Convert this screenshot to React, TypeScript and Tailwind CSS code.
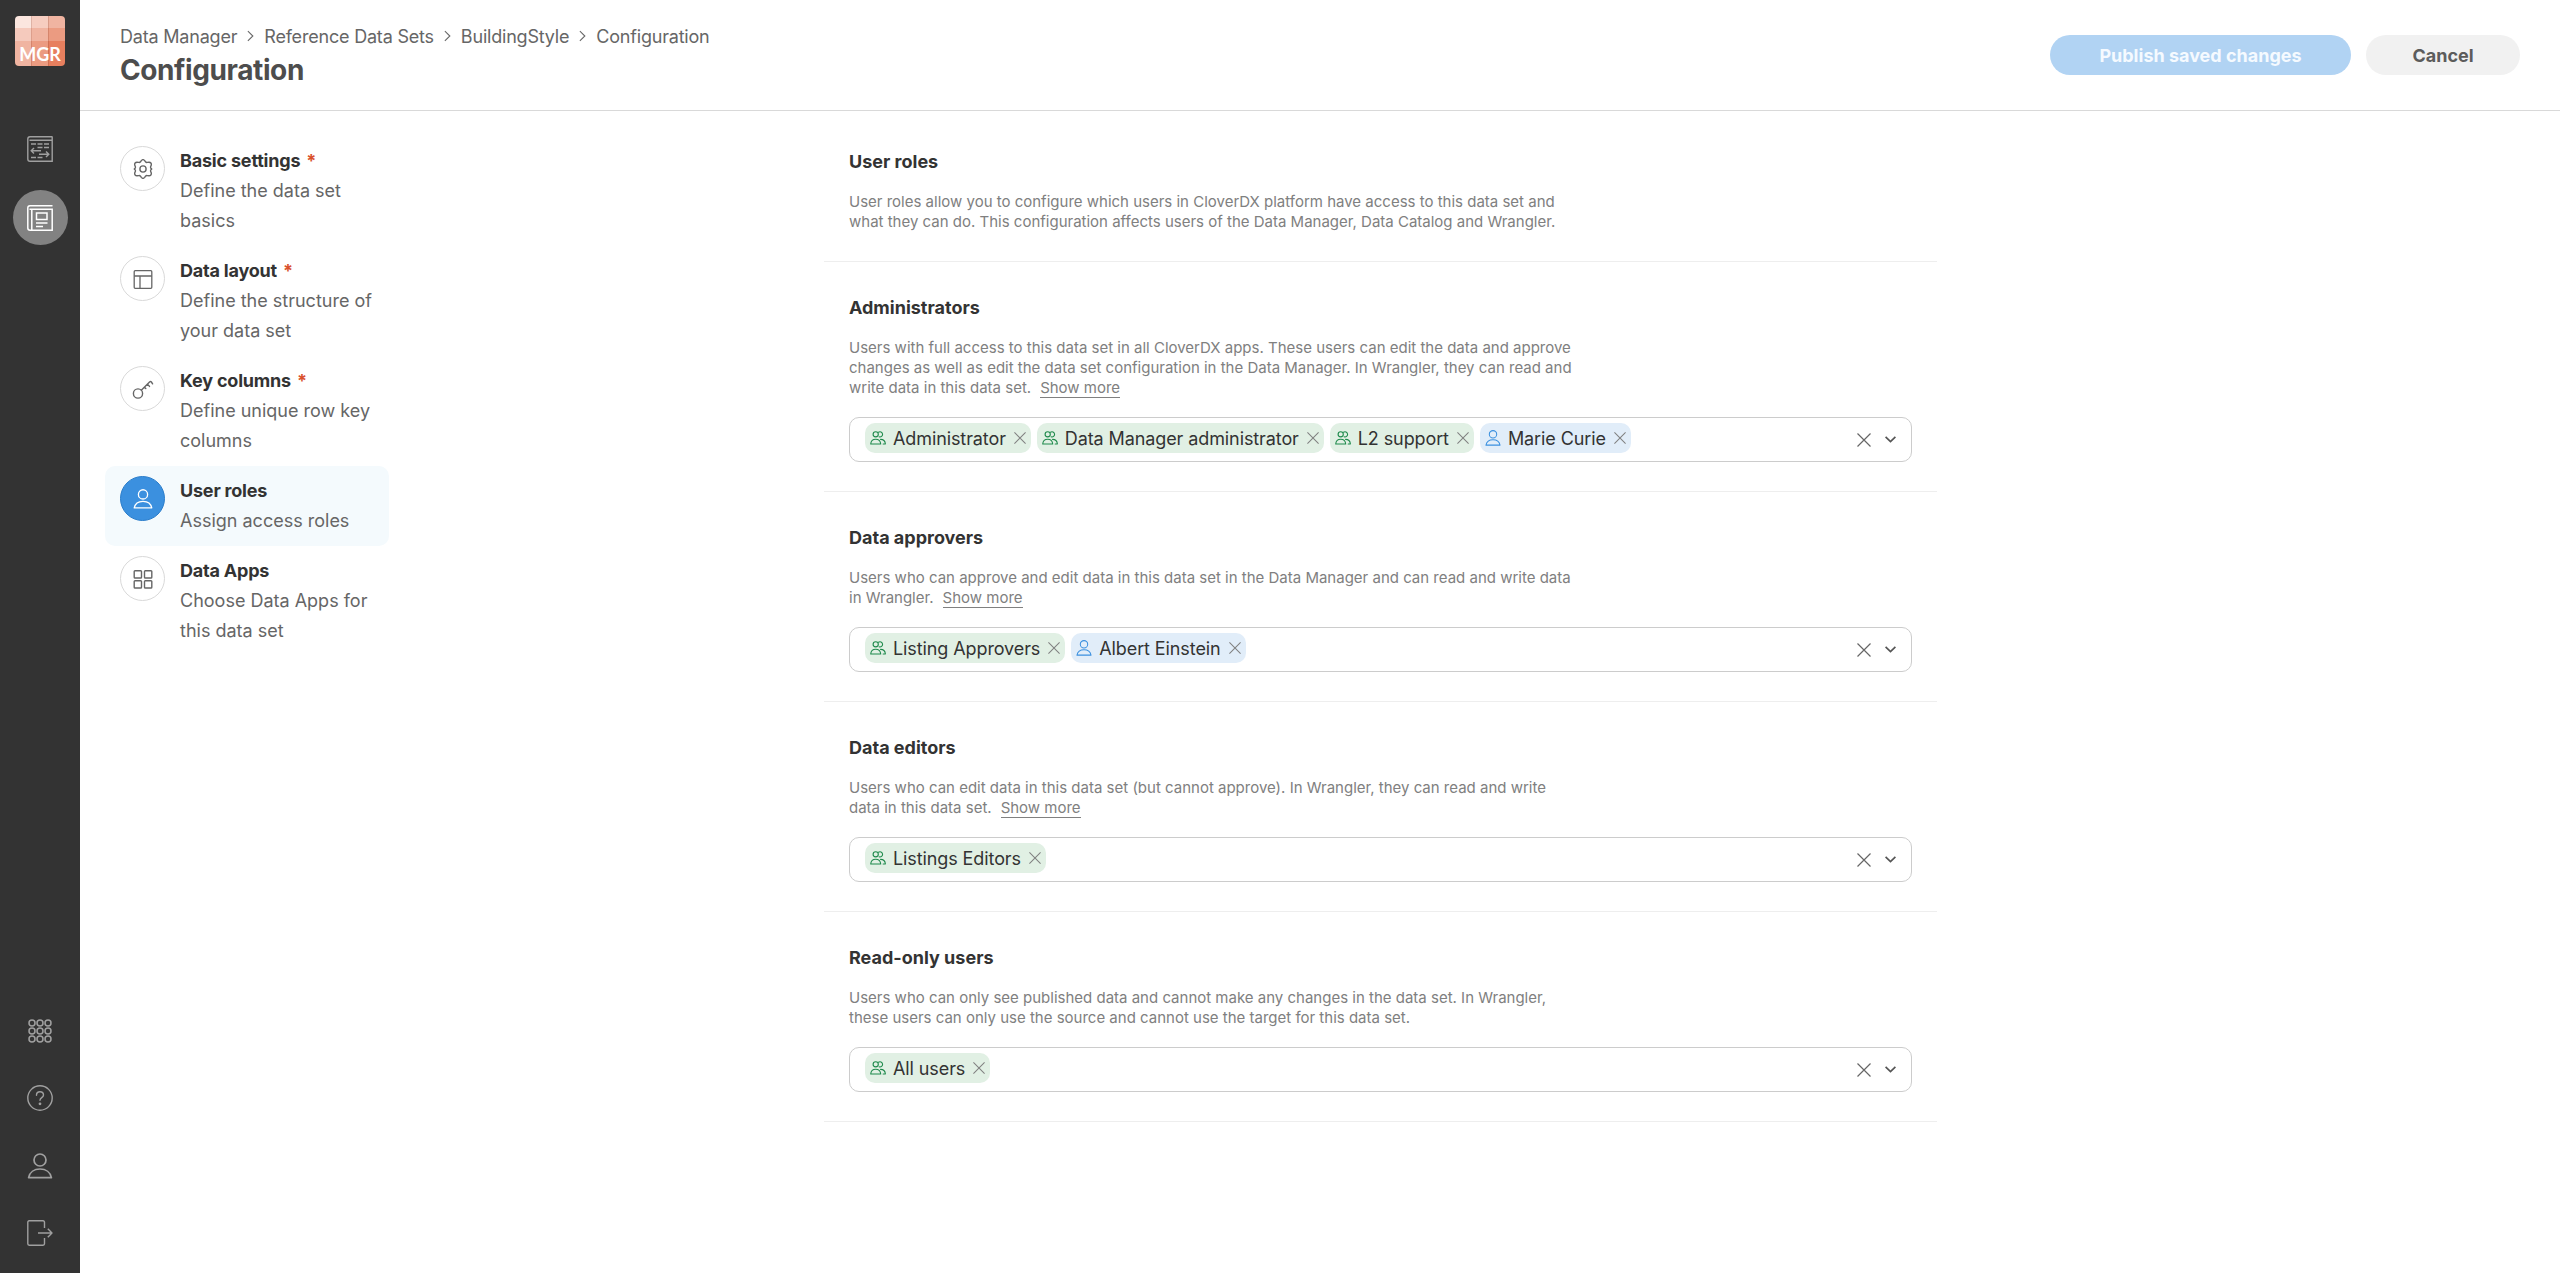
import type { ReactNode } from "react";

type Tag = { label: string; kind: "group" | "user" };

type Section = {
  title: string;
  lines: string[];
  showMore?: boolean;
  tags?: Tag[];
};

type Step = { title: string; lines: string[]; required?: boolean; active?: boolean; icon: ReactNode };

const sections: Section[] = [
  {
    title: "User roles",
    lines: [
      "User roles allow you to configure which users in CloverDX platform have access to this data set and",
      "what they can do. This configuration affects users of the Data Manager, Data Catalog and Wrangler.",
    ],
  },
  {
    title: "Administrators",
    lines: [
      "Users with full access to this data set in all CloverDX apps. These users can edit the data and approve",
      "changes as well as edit the data set configuration in the Data Manager. In Wrangler, they can read and",
      "write data in this data set.",
    ],
    showMore: true,
    tags: [
      { label: "Administrator", kind: "group" },
      { label: "Data Manager administrator", kind: "group" },
      { label: "L2 support", kind: "group" },
      { label: "Marie Curie", kind: "user" },
    ],
  },
  {
    title: "Data approvers",
    lines: [
      "Users who can approve and edit data in this data set in the Data Manager and can read and write data",
      "in Wrangler.",
    ],
    showMore: true,
    tags: [
      { label: "Listing Approvers", kind: "group" },
      { label: "Albert Einstein", kind: "user" },
    ],
  },
  {
    title: "Data editors",
    lines: [
      "Users who can edit data in this data set (but cannot approve). In Wrangler, they can read and write",
      "data in this data set.",
    ],
    showMore: true,
    tags: [{ label: "Listings Editors", kind: "group" }],
  },
  {
    title: "Read-only users",
    lines: [
      "Users who can only see published data and cannot make any changes in the data set. In Wrangler,",
      "these users can only use the source and cannot use the target for this data set.",
    ],
    tags: [{ label: "All users", kind: "group" }],
  },
];

const UserIcon = ({ className }: { className: string }) => (
  <svg viewBox="0 0 26 26" className={className} fill="none" stroke="currentColor" strokeWidth="1.7" strokeLinejoin="round">
    <circle cx="13" cy="7" r="6" />
    <path d="M1.6 24.6C2.6 19.3 7.2 16 13 16s10.4 3.3 11.4 8.6z" />
  </svg>
);

const GroupIcon = () => (
  <svg viewBox="0 0 16 14" className="h-[14px] w-4" fill="none" stroke="#1f8a4c" strokeWidth="1.1" strokeLinejoin="round" strokeLinecap="round">
    <circle cx="5.7" cy="3.3" r="2.6" />
    <path d="M.7 13c.3-3 2.300-4.700 5-4.700s4.700 1.700 5 4.700z" />
    <path d="M8.500 1.200a2.600 2.600 0 1 1 .6 4.600M10.600 8.400c2.600 0 4.500 1.700 4.800 4.600h-2.200" />
  </svg>
);

const Cross = ({ className }: { className: string }) => (
  <svg viewBox="0 0 14 14" className={className} fill="none" stroke="currentColor" strokeWidth="1.2">
    <path d="M.5.5l13 13M13.500.5l-13 13" />
  </svg>
);

const steps: Step[] = [
  {
    title: "Basic settings",
    lines: ["Define the data set", "basics"],
    required: true,
    icon: (
      <svg viewBox="0 0 20 20" className="h-5 w-5" fill="none" stroke="currentColor" strokeWidth="1.400" strokeLinejoin="round">
        <circle cx="10" cy="10" r="3.100" />
        <path d="M8.300 1.600Q10-.3 11.700 1.600L12.500 2.800Q13.200 3.600 14.200 3.400L16 3.200Q18.600 3.500 18.300 6L17.700 7.600Q17.300 8.700 18 9.400Q19.400 10 18 10.700Q17.300 11.300 17.700 12.400L18.300 14Q18.600 16.500 16 16.800L14.200 16.600Q13.200 16.400 12.500 17.200L11.700 18.400Q10 20.300 8.300 18.400L7.500 17.200Q6.800 16.400 5.800 16.600L4 16.800Q1.400 16.500 1.700 14L2.300 12.400Q2.700 11.300 2 10.700Q.6 10 2 9.400Q2.700 8.700 2.300 7.600L1.700 6Q1.400 3.500 4 3.200L5.800 3.400Q6.800 3.600 7.500 2.800Z" />
      </svg>
    ),
  },
  {
    title: "Data layout",
    lines: ["Define the structure of", "your data set"],
    required: true,
    icon: (
      <svg viewBox="0 0 20 20" className="h-5 w-5" fill="none" stroke="currentColor" strokeWidth="1.300">
        <rect x="1.200" y="1.700" width="17.600" height="17.600" rx="1" />
        <path d="M1.200 7h17.600M7 7v12.300" />
      </svg>
    ),
  },
  {
    title: "Key columns",
    lines: ["Define unique row key", "columns"],
    required: true,
    icon: (
      <svg viewBox="0 0 22 20" className="h-5 w-[22px]" fill="none" stroke="currentColor" strokeWidth="1.400" strokeLinecap="round" strokeLinejoin="round">
        <circle cx="6" cy="14.500" r="4.600" />
        <path d="M9.300 11.200L17.800 2.800Q18.700 2.200 19.400 3l1.200 1.800M15.500 5.200l2 2.200M12.500 8.200l1.300 1.400" />
      </svg>
    ),
  },
  {
    title: "User roles",
    lines: ["Assign access roles"],
    active: true,
    icon: <UserIcon className="h-5 w-5" />,
  },
  {
    title: "Data Apps",
    lines: ["Choose Data Apps for", "this data set"],
    icon: (
      <svg viewBox="0 0 20 20" className="h-5 w-5" fill="none" stroke="currentColor" strokeWidth="1.400">
        <rect x="1.200" y="1.700" width="7.300" height="7.300" rx=".8" />
        <rect x="11.500" y="1.700" width="7.300" height="7.300" rx=".8" />
        <rect x="1.200" y="11.700" width="7.300" height="7.300" rx=".8" />
        <rect x="11.500" y="11.700" width="7.300" height="7.300" rx=".8" />
      </svg>
    ),
  },
];

const crumbs = ["Data Manager", "Reference Data Sets", "BuildingStyle", "Configuration"];

function Logo() {
  return (
    <div className="relative mt-4 h-[50px] w-[50px] overflow-hidden rounded-[4px]">
      <div className="grid h-full grid-cols-[16px_17px_17px] grid-rows-[12px_13px_25px]">
        <span className="bg-[#fbe6df]" />
        <span className="border-l border-[#dfb3a5] bg-[#f6cdc0]" />
        <span className="border-l border-[#d79a87] bg-[#f0b4a1]" />
        <span className="bg-[#f5cabd]" />
        <span className="border-l border-[#dd9f8c] bg-[#f0b4a1]" />
        <span className="border-l border-[#d5856c] bg-[#eb9b81]" />
        <span className="bg-[#f0b4a1]" />
        <span className="border-l border-[#d5856c] bg-[#eb9b81]" />
        <span className="border-l border-[#cf6f51] bg-[#e77f5e]" />
      </div>
      <span className="absolute inset-x-0 bottom-[3px] text-center font-['Lato'] text-[18px] leading-[18px] font-bold text-white">MGR</span>
    </div>
  );
}

function Sidebar() {
  return (
    <aside className="flex w-20 shrink-0 flex-col items-center bg-[#333333] text-[#a0a0a0]">
      <Logo />
      <svg viewBox="0 0 26 26" className="mt-[70px] h-[26px] w-[26px]" fill="none" stroke="currentColor" strokeWidth="1.400">
        <path d="M25.500.8H3Q.8.8.8 3v20q0 2.200 2.200 2.200h22.200V4.200H2.500M25.200.8v3.400" />
        <path d="M4 8h5M10.500 8h5M17 8h5M10.500 11.500h5M17 11.500h5M4 21.500h5M10.500 21.500h5" />
        <path d="M14 14.800H4.500M7 12l-2.800 2.800L7 17.600M12 18.200h9.500M19 15.400l2.800 2.800L19 21" />
      </svg>
      <div className="mt-[28px] flex h-[55px] w-[55px] items-center justify-center rounded-full bg-[#828282] text-white">
        <svg viewBox="0 0 26 26" className="h-[26px] w-[26px]" fill="none" stroke="currentColor" strokeWidth="1.500">
          <path d="M25.500.8H3Q.8.8.8 3v20q0 2.200 2.200 2.200h22.200V4.200H2.500M4.800 4.200v21" />
          <rect x="9.500" y="8" width="10.500" height="6.500" />
          <path d="M9 18h11.500M9 21.500h7" />
        </svg>
      </div>
      <div className="mt-auto flex flex-col items-center pb-[27px]">
        <svg viewBox="0 0 26 26" className="h-[26px] w-[26px]" fill="none" stroke="currentColor" strokeWidth="1.500">
          {[5, 13, 21].map((cy) => [5, 13, 21].map((cx) => <circle key={`${cx}-${cy}`} cx={cx} cy={cy} r="3" />))}
        </svg>
        <svg viewBox="0 0 26 26" className="mt-[41px] h-[26px] w-[26px]" fill="none" stroke="currentColor" strokeWidth="1.400" strokeLinecap="round">
          <circle cx="13" cy="13" r="12.200" />
          <path d="M9.500 10.200c0-2.200 1.500-3.500 3.500-3.500s3.500 1.300 3.500 3.200c0 2.700-3.500 2.700-3.500 5.300" />
          <circle cx="13" cy="18.800" r=".7" fill="currentColor" />
        </svg>
        <UserIcon className="mt-[42px] h-[26px] w-[26px]" />
        <svg viewBox="0 0 26 26" className="mt-[41px] h-[26px] w-[26px]" fill="none" stroke="currentColor" strokeWidth="1.400" strokeLinejoin="round">
          <path d="M17.500 8V2.200Q17.500.8 16 .8H2.200Q.8.8.8 2.200v21.600q0 1.400 1.400 1.400H16q1.500 0 1.500-1.400V18" />
          <path d="M11 13h14M20.800 8.800L25 13l-4.200 4.200" />
        </svg>
      </div>
    </aside>
  );
}

function Header() {
  return (
    <header className="flex h-[111px] items-start justify-between border-b border-[#d9d9d9] pr-10 pl-10">
      <div className="pt-[22px]">
        <nav className="flex h-7 items-center text-[18px] tracking-[-0.2px] text-[#666666]">
          {crumbs.map((crumb, i) => (
            <span key={crumb} className="flex items-center">
              {i > 0 && (
                <svg viewBox="0 0 8 12" className="mr-[10px] ml-[10px] h-3 w-[7px]" fill="none" stroke="currentColor" strokeWidth="1.200">
                  <path d="M1 .5L6.700 6 1 11.500" />
                </svg>
              )}
              {crumb}
            </span>
          ))}
        </nav>
        <h1 className="text-[28px] leading-10 font-bold tracking-[-0.4px] text-[#4d4d4d]">Configuration</h1>
      </div>
      <div className="flex gap-[15px] pt-[35px] text-[18px] font-bold">
        <button className="h-10 w-[301px] rounded-full bg-[#b1d3f3] text-[#f5faff]">Publish saved changes</button>
        <button className="h-10 w-[154px] rounded-full bg-[#f1f1f1] text-[#5c5c5c]">Cancel</button>
      </div>
    </header>
  );
}

function StepItem({ step }: { step: Step }) {
  return (
    <li className={`flex gap-[15px] rounded-[10px] px-[15px] py-[10px] ${step.active ? "bg-[#f4fafd]" : ""}`}>
      <span
        className={`flex h-[45px] w-[45px] shrink-0 items-center justify-center rounded-full border ${
          step.active ? "border-[#2a7dcb] bg-[#3b90df] text-white" : "border-[#d9d9d9] bg-white text-[#666666]"
        }`}
      >
        {step.icon}
      </span>
      <div className="text-[18px] leading-[30px] whitespace-nowrap">
        <h3 className="font-bold tracking-[-0.2px] text-[#333333]">
          {step.title}
          {step.required && <span className="ml-[6px] text-[#d9512c]">*</span>}
        </h3>
        {step.lines.map((line) => (
          <p key={line} className="text-[#666666]">{line}</p>
        ))}
      </div>
    </li>
  );
}

function TagChip({ tag }: { tag: Tag }) {
  return (
    <span className={`flex h-[30px] items-center rounded-[10px] pr-[5px] pl-[5px] ${tag.kind === "group" ? "bg-[#e1f0e4]" : "bg-[#e1edf9]"}`}>
      {tag.kind === "group" ? <GroupIcon /> : <UserIcon className="h-4 w-4 text-[#3b90df]" />}
      <span className="ml-[7px] text-[18px] tracking-[-0.1px] text-[#333333]">{tag.label}</span>
      <Cross className="ml-2 h-3 w-3 text-[#808080]" />
    </span>
  );
}

function RoleSection({ section }: { section: Section }) {
  return (
    <section className="border-b border-[#eeeeee] px-[25px] pt-[31px] pb-[29px]">
      <h2 className="text-[18px] leading-[30px] font-bold text-[#333333]">{section.title}</h2>
      <div className="mt-[15px] text-[15px] leading-5 whitespace-nowrap text-[#808080]">
        {section.lines.map((line, i) => (
          <p key={line}>
            {line}
            {section.showMore && i === section.lines.length - 1 && (
              <a className="ml-[9px] border-b border-[#808080]">Show more</a>
            )}
          </p>
        ))}
      </div>
      {section.tags && (
        <div className="mt-[19px] flex h-[45px] items-center rounded-[10px] border border-[#cccccc] pr-[15px] pl-[15px]">
          <div className="flex gap-[6px] pb-[3px]">
            {section.tags.map((tag) => (
              <TagChip key={tag.label} tag={tag} />
            ))}
          </div>
          <Cross className="ml-auto h-[14px] w-[14px] text-[#666666]" />
          <svg viewBox="0 0 11 7" className="ml-[14px] h-[7px] w-[11px]" fill="none" stroke="#555555" strokeWidth="1.700">
            <path d="M.6.8l4.900 4.700L10.400.8" />
          </svg>
        </div>
      )}
    </section>
  );
}

export default function App() {
  return (
    <div className="flex h-[1273px] overflow-hidden bg-white font-['Inter',sans-serif]">
      <Sidebar />
      <main className="min-w-0 flex-1">
        <Header />
        <div className="flex">
          <ul className="mt-[25px] ml-[25px] w-[284px] shrink-0">
            {steps.map((step) => (
              <StepItem key={step.title} step={step} />
            ))}
          </ul>
          <div className="ml-[435px] w-[1113px]">
            <div className="h-[5px]" />
            {sections.map((section) => (
              <RoleSection key={section.title} section={section} />
            ))}
          </div>
        </div>
      </main>
    </div>
  );
}
